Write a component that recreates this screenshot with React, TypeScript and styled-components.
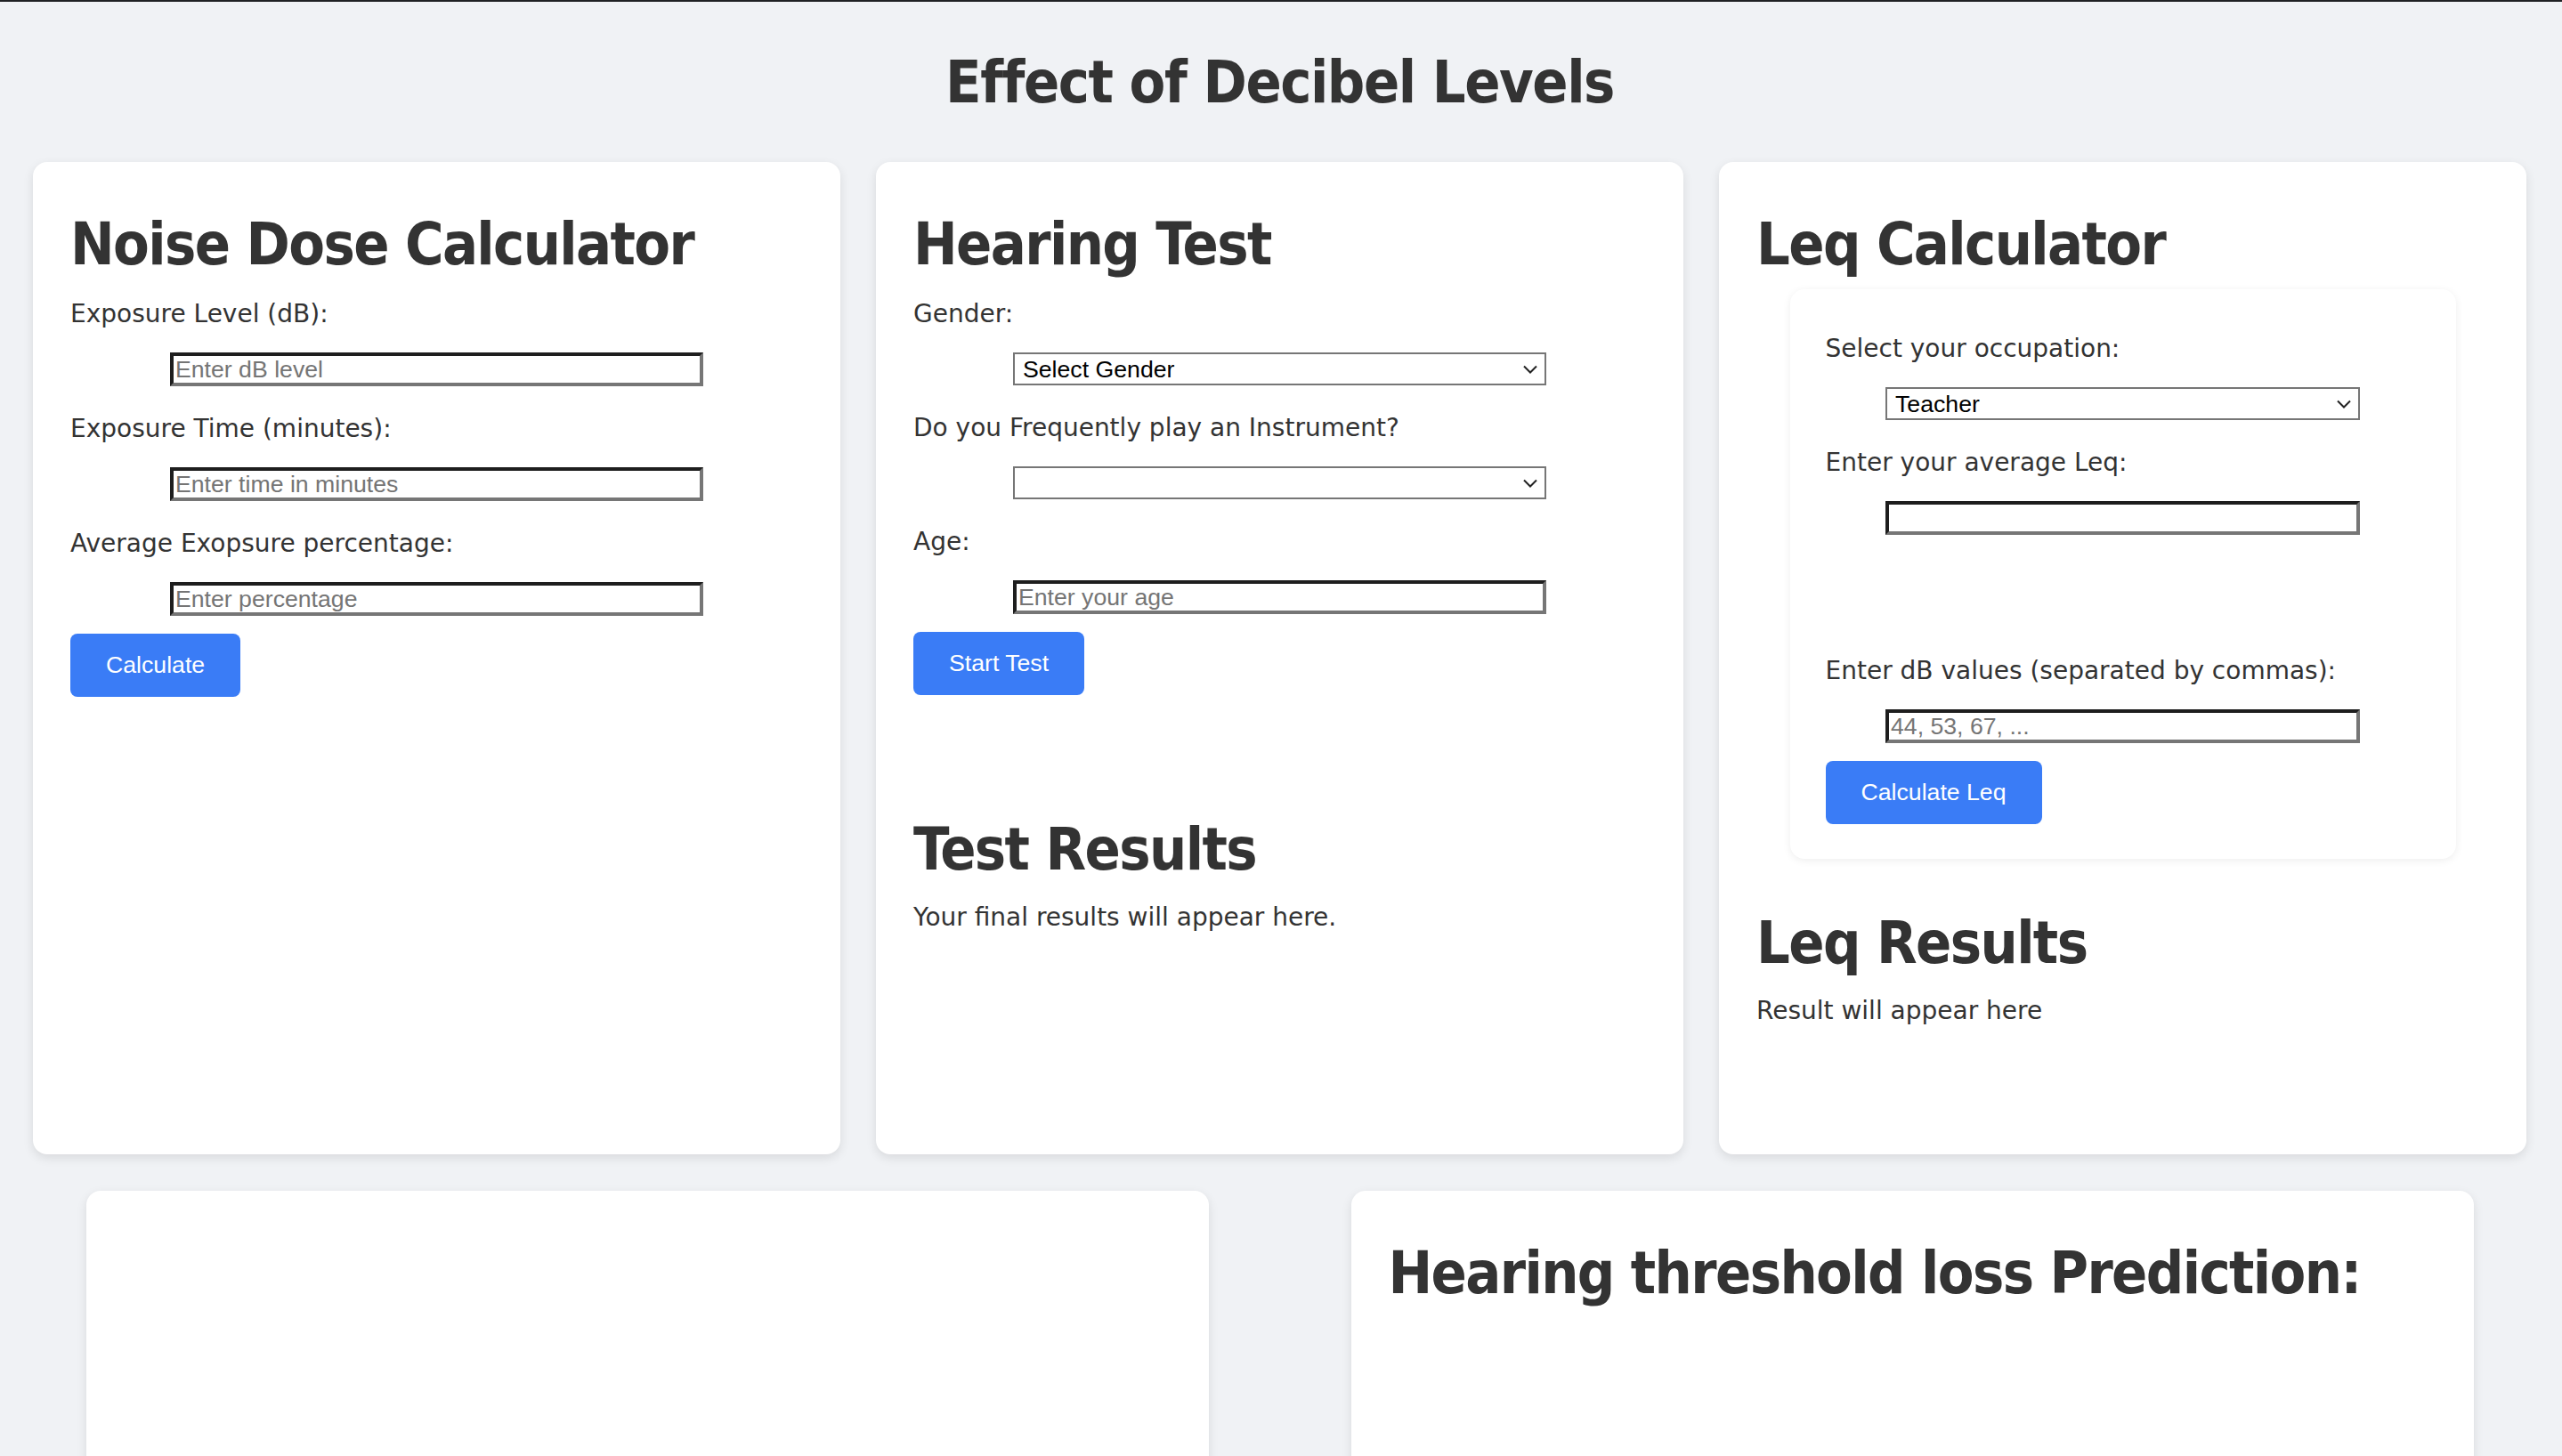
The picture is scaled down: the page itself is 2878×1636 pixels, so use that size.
import React from "react";
import styled, { createGlobalStyle } from "styled-components";

const GlobalStyle = createGlobalStyle`
  html, body {
    margin: 0;
    padding: 0;
    background: #f0f2f5;
  }
  body {
    font-family: "DejaVu Sans", sans-serif;
    color: #333;
  }
`;

const Page = styled.div`
  border-top: 2px solid #202124;
  padding: 0 40px 0 37px;
  min-height: 1634px;
`;

const Title = styled.h1`
  margin: 51px 0 49px;
  text-align: center;
  font-family: "DejaVu Sans Condensed", "DejaVu Sans", sans-serif;
  font-stretch: condensed;
  font-size: 66px;
  line-height: 80px;
  font-weight: 700;
  letter-spacing: -1.45px;
  color: #333;
`;

const TopRow = styled.div`
  display: grid;
  grid-template-columns: repeat(3, 1fr);
  gap: 40px;
`;

const Card = styled.section`
  background: #fff;
  border-radius: 16px;
  box-shadow: 0 4px 12px rgba(0, 0, 0, 0.1);
  padding: 53px 42px 40px;
  box-sizing: border-box;
  min-height: 1115px;
  display: flex;
  flex-direction: column;
`;

const Heading = styled.h2<{ $mb?: number; $mt?: number }>`
  margin: ${(p) => p.$mt ?? 0}px 0 ${(p) => p.$mb ?? 21}px;
  font-family: "DejaVu Sans Condensed", "DejaVu Sans", sans-serif;
  font-stretch: condensed;
  font-size: 66px;
  line-height: 80px;
  font-weight: 700;
  letter-spacing: -1.6px;
  color: #333;
`;

const Fields = styled.div`
  display: flex;
  flex-direction: column;
  gap: 31px;
`;

const Field = styled.div`
  display: flex;
  flex-direction: column;
`;

const Label = styled.label`
  display: block;
  font-size: 28px;
  line-height: 34px;
  color: #333;
`;

const Control = styled.div<{ $w: number; $mt?: number }>`
  position: relative;
  width: ${(p) => p.$w}px;
  margin: ${(p) => p.$mt ?? 26}px auto 0;
`;

const TextInput = styled.input`
  display: block;
  width: 100%;
  height: 38px;
  box-sizing: border-box;
  border-style: solid;
  border-width: 4px;
  border-color: #1e1e1e #767676 #767676 #1e1e1e;
  padding: 2px 2px;
  margin: 0;
  background: #fff;
  font-family: "Liberation Sans", Arial, sans-serif;
  font-size: 26.67px;
  color: #000;
  outline: none;
  &::placeholder {
    color: #757575;
  }
`;

const Select = styled.select`
  display: block;
  width: 100%;
  height: 37px;
  box-sizing: border-box;
  appearance: none;
  -webkit-appearance: none;
  border: 2px solid #767676;
  border-radius: 0;
  padding: 0 40px 0 9px;
  margin: 0;
  background: #fff;
  font-family: "Liberation Sans", Arial, sans-serif;
  font-size: 26.67px;
  color: #000;
  outline: none;
`;

const Chevron = styled.svg`
  position: absolute;
  right: 10px;
  top: 50%;
  width: 16px;
  height: 10px;
  margin-top: -5px;
  pointer-events: none;
`;

const Button = styled.button<{ $mt?: number }>`
  align-self: flex-start;
  margin-top: ${(p) => p.$mt ?? 20}px;
  background: #3a7cf6;
  color: #fff;
  border: none;
  border-radius: 8px;
  padding: 20px 40px;
  font-family: "Liberation Sans", Arial, sans-serif;
  font-size: 26.67px;
  line-height: 31px;
  cursor: pointer;
`;

const Spacer = styled.div<{ $h: number }>`
  height: ${(p) => p.$h}px;
`;

const Text = styled.p`
  margin: 19px 0 0;
  font-size: 28px;
  line-height: 34px;
  color: #333;
`;

const Panel = styled.div`
  width: 748px;
  align-self: center;
  box-sizing: border-box;
  background: #fff;
  border-radius: 16px;
  box-shadow: 0 2px 10px rgba(0, 0, 0, 0.07);
  padding: 50px 40px 39px;
  display: flex;
  flex-direction: column;
`;

const BottomRow = styled.div`
  display: flex;
  justify-content: center;
  gap: 160px;
  margin-top: 41px;
`;

const WideCard = styled.section`
  width: 1261px;
  min-height: 420px;
  background: #fff;
  border-radius: 16px;
  box-shadow: 0 4px 12px rgba(0, 0, 0, 0.1);
  padding: 53px 42px 40px;
  box-sizing: border-box;
`;

const ChevronIcon = () => (
  <Chevron viewBox="0 0 16 10" aria-hidden="true">
    <path d="M1 1.5 L8 8.5 L15 1.5" fill="none" stroke="#222" strokeWidth="2" />
  </Chevron>
);

const InputField = ({ label, placeholder, w }: { label: string; placeholder?: string; w: number }) => (
  <Field>
    <Label>{label}</Label>
    <Control $w={w}>
      <TextInput type="text" placeholder={placeholder} />
    </Control>
  </Field>
);

const SelectField = ({ label, options, w }: { label: string; options: string[]; w: number }) => (
  <Field>
    <Label>{label}</Label>
    <Control $w={w}>
      <Select defaultValue={options[0]}>
        {options.map((o) => (
          <option key={o} value={o}>
            {o}
          </option>
        ))}
      </Select>
      <ChevronIcon />
    </Control>
  </Field>
);

export default function App() {
  return (
    <>
      <GlobalStyle />
      <Page>
        <Title>Effect of Decibel Levels</Title>
        <TopRow>
          <Card>
            <Heading>Noise Dose Calculator</Heading>
            <Fields>
              <InputField label="Exposure Level (dB):" placeholder="Enter dB level" w={599} />
              <InputField label="Exposure Time (minutes):" placeholder="Enter time in minutes" w={599} />
              <InputField label="Average Exopsure percentage:" placeholder="Enter percentage" w={599} />
            </Fields>
            <Button>Calculate</Button>
          </Card>

          <Card>
            <Heading>Hearing Test</Heading>
            <Fields>
              <SelectField label="Gender:" options={["Select Gender", "Male", "Female"]} w={599} />
              <SelectField label="Do you Frequently play an Instrument?" options={["", "Yes", "No"]} w={599} />
              <InputField label="Age:" placeholder="Enter your age" w={599} />
            </Fields>
            <Button>Start Test</Button>
            <Spacer $h={79} />
            <Heading $mt={55} $mb={0}>Test Results</Heading>
            <Text>Your final results will appear here.</Text>
          </Card>

          <Card>
            <Heading $mb={10}>Leq Calculator</Heading>
            <Panel>
              <Fields>
                <SelectField
                  label="Select your occupation:"
                  options={["Teacher", "Construction Worker", "Musician", "Office Worker"]}
                  w={533}
                />
                <InputField label="Enter your average Leq:" w={533} />
              </Fields>
              <Spacer $h={136} />
              <InputField label="Enter dB values (separated by commas):" placeholder="44, 53, 67, ..." w={533} />
              <Button>Calculate Leq</Button>
            </Panel>
            <Heading $mt={55} $mb={0}>Leq Results</Heading>
            <Text>Result will appear here</Text>
          </Card>
        </TopRow>

        <BottomRow>
          <WideCard />
          <WideCard>
            <Heading $mb={0}>Hearing threshold loss Prediction:</Heading>
          </WideCard>
        </BottomRow>
      </Page>
    </>
  );
}
